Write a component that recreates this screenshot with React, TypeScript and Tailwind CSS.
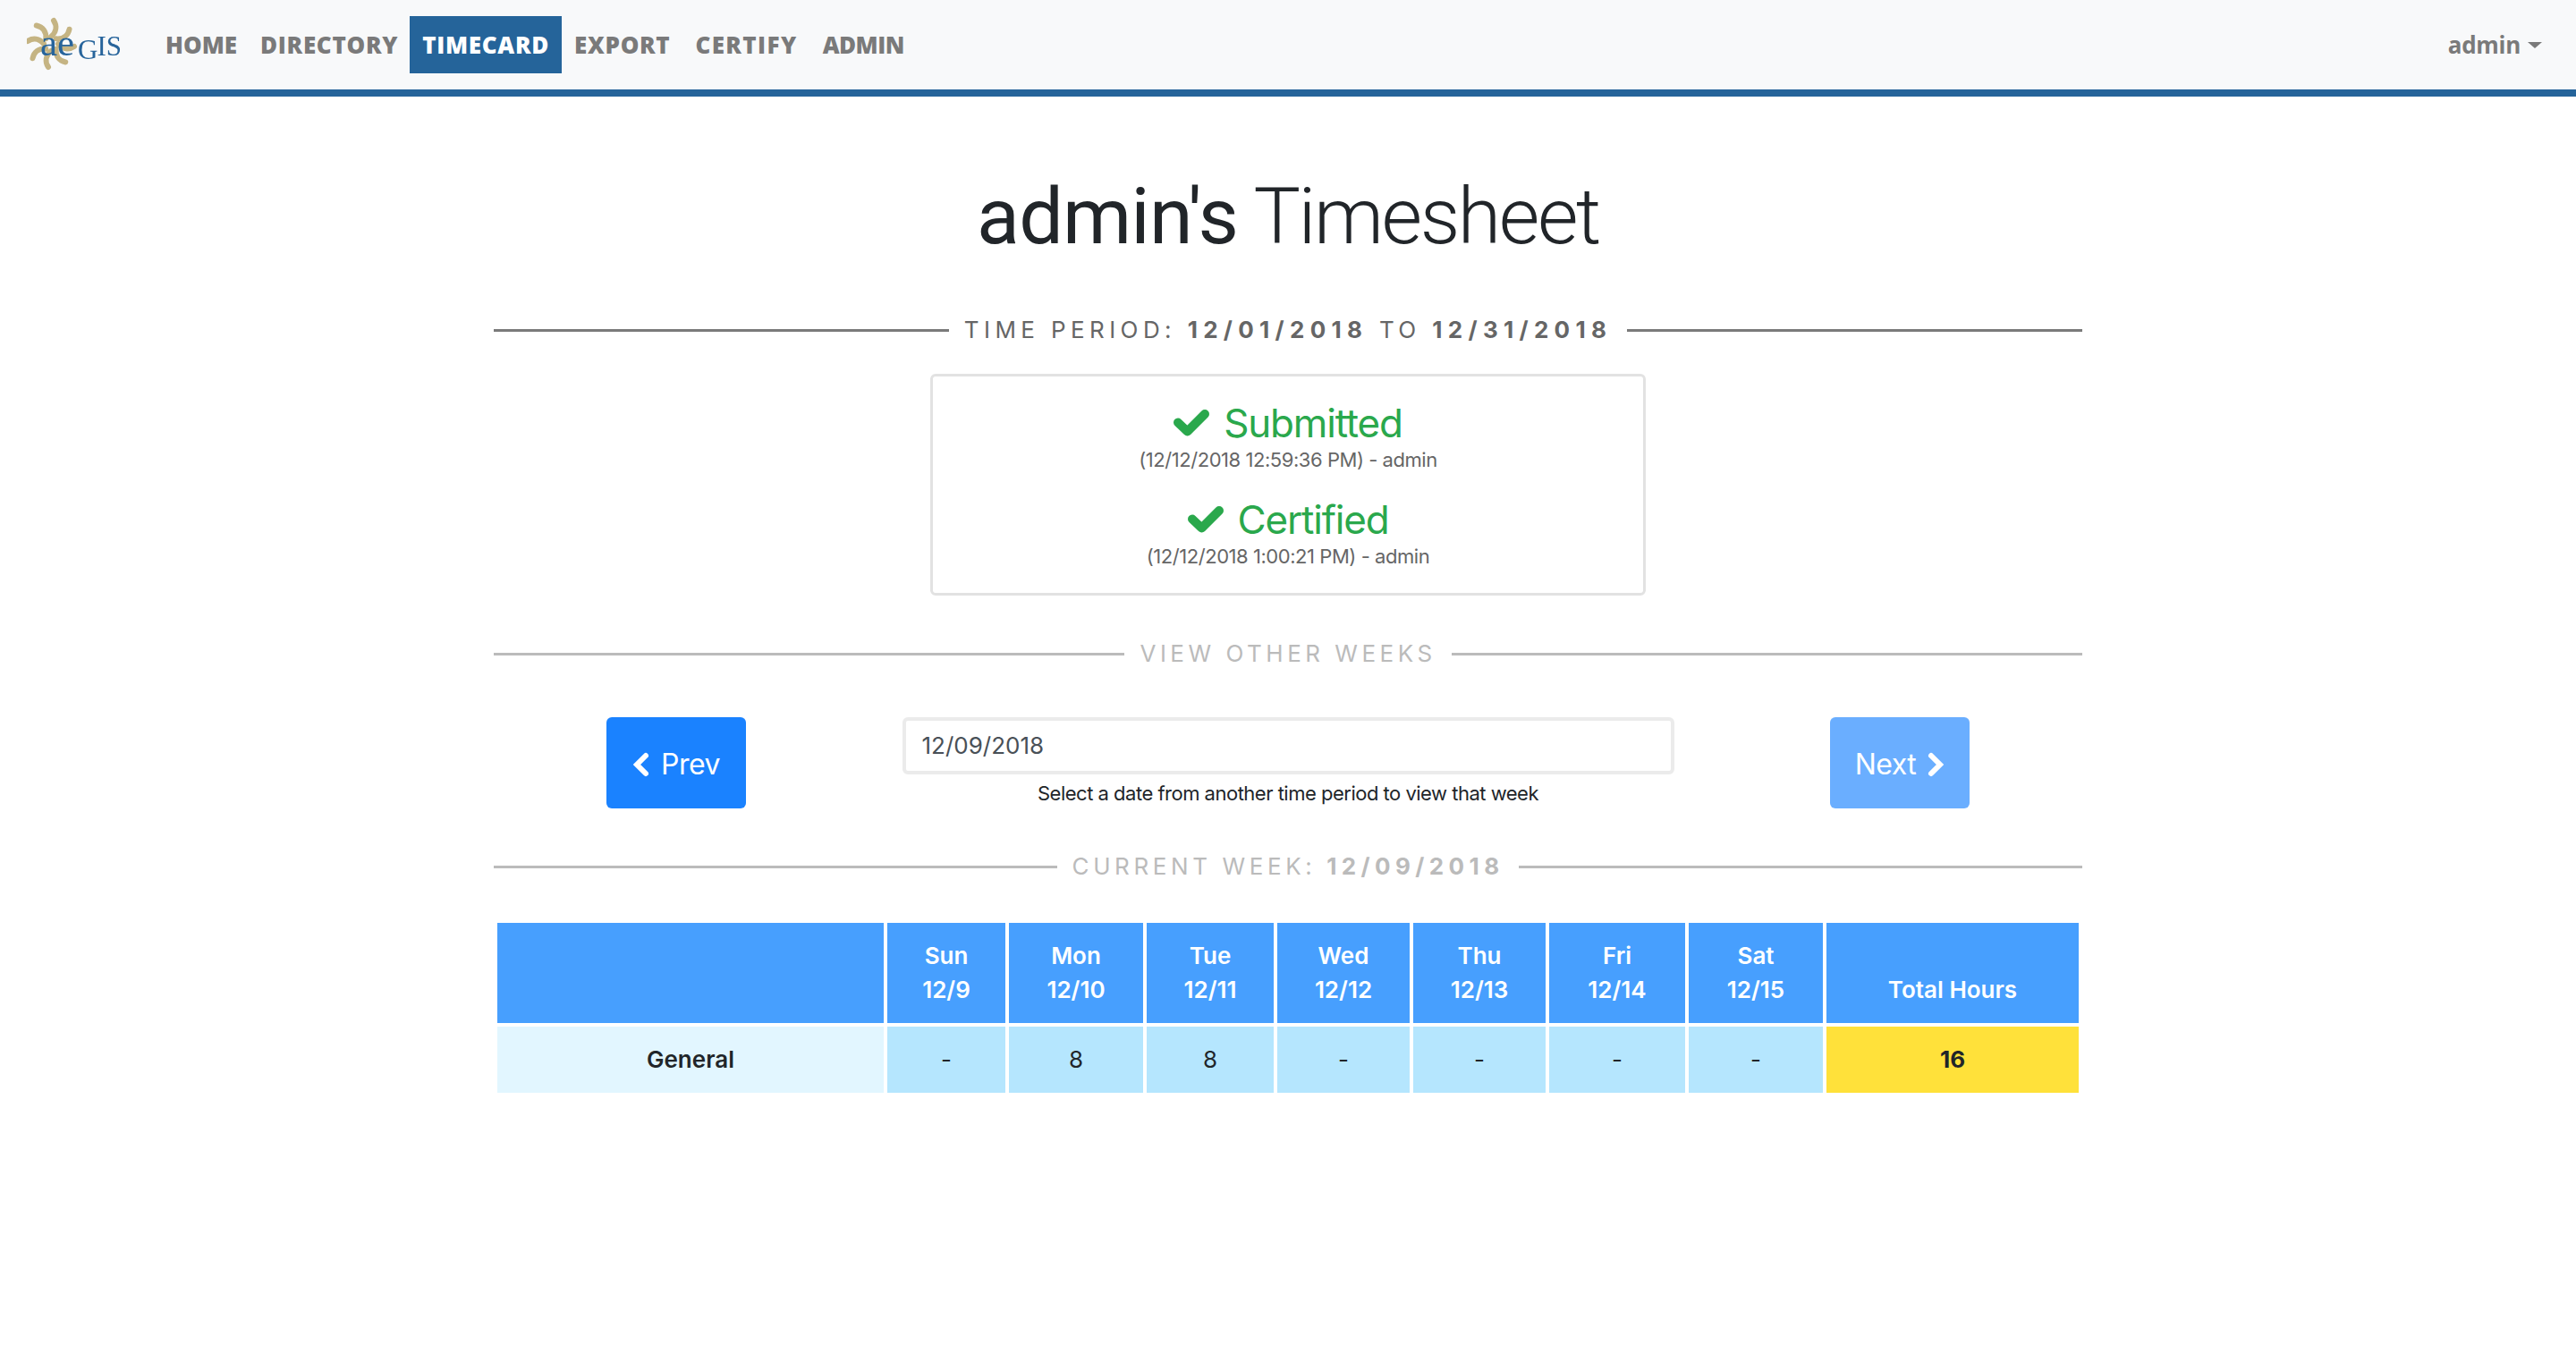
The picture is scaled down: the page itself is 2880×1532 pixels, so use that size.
import React from "react";

function Logo() {
  const angles = [0, 45, 90, 135, 180, 225, 270, 315];
  return (
    <svg width="112" height="64" viewBox="0 0 112 64" className="block shrink-0 blur-[0.4px]">
      <g transform="translate(27 31)" fill="none" stroke="#c5b483" strokeWidth="6" strokeLinecap="round">
        {angles.map((a) => (
          <path key={a} d="M0 -8 C 6 -13 7 -20 3 -26" transform={`rotate(${a})`} />
        ))}
      </g>
      <g fill="#27649b" fontFamily="'Liberation Serif', serif">
        <text x="15" y="44" fontSize="43">ae</text>
        <text x="57" y="44" fontSize="31">
          <tspan dy="4">G</tspan>
          <tspan dy="-4" dx="-1">IS</tspan>
        </text>
      </g>
    </svg>
  );
}

function Check() {
  return (
    <svg width="40" height="30" viewBox="0 0 40 30" className="block shrink-0">
      <path d="M5 14.5 L15.5 24.5 L35 5" fill="none" stroke="currentColor" strokeWidth="10" strokeLinecap="round" strokeLinejoin="round" />
    </svg>
  );
}

function Chevron({ right }: { right?: boolean }) {
  return (
    <svg width="20" height="30" viewBox="0 0 20 30" className="block shrink-0">
      <path
        d={right ? "M5 5 L15 15 L5 25" : "M15 5 L5 15 L15 25"}
        fill="none"
        stroke="currentColor"
        strokeWidth="6"
        strokeLinecap="round"
        strokeLinejoin="miter"
      />
    </svg>
  );
}

function Divider({ children, tone, tracking }: { children: React.ReactNode; tone: "dark" | "light"; tracking: string }) {
  const line = tone === "dark" ? "bg-[#7a7a7a]" : "bg-[#bbbbbb]";
  const text = tone === "dark" ? "text-[#666666]" : "text-[#bbbbbb]";
  return (
    <div className="flex items-center gap-[17px]">
      <div className={`h-[3px] flex-1 ${line}`} />
      <div className={`text-[26px] leading-[32px] whitespace-nowrap ${tracking} ${text}`}>{children}</div>
      <div className={`h-[3px] flex-1 ${line}`} />
    </div>
  );
}

const days = [
  { d: "Sun", n: "12/9", v: "-", w: "w-[132px]" },
  { d: "Mon", n: "12/10", v: "8", w: "w-[150px]" },
  { d: "Tue", n: "12/11", v: "8", w: "w-[142px]" },
  { d: "Wed", n: "12/12", v: "-", w: "w-[148px]" },
  { d: "Thu", n: "12/13", v: "-", w: "w-[148px]" },
  { d: "Fri", n: "12/14", v: "-", w: "w-[152px]" },
  { d: "Sat", n: "12/15", v: "-", w: "w-[150px]" },
];

const nav = [
  { t: "HOME", c: "px-[13px] tracking-[0px] text-[#7a7a7a]" },
  { t: "DIRECTORY", c: "px-[13px] tracking-[0.7px] text-[#7a7a7a]" },
  { t: "TIMECARD", c: "px-[14px] tracking-[0.7px] text-white bg-[#25649a]" },
  { t: "EXPORT", c: "px-[14px] tracking-[0.7px] text-[#7a7a7a]" },
  { t: "CERTIFY", c: "px-[14px] tracking-[1.4px] text-[#7a7a7a]" },
  { t: "ADMIN", c: "px-[14px] tracking-[-0.5px] text-[#7a7a7a]" },
];

function Status({ label, sub }: { label: string; sub: string }) {
  return (
    <div className="flex flex-col items-center">
      <div className="flex items-center gap-[16px] text-[#2aa84c] text-[44px] leading-[54px] tracking-[-1.2px]">
        <Check />
        <span>{label}</span>
      </div>
      <div className="text-[22px] leading-[28px] text-[#666666] tracking-[-0.45px]">{sub}</div>
    </div>
  );
}

export default function App() {
  return (
    <div className="min-h-[1532px] bg-white font-['Inter','Liberation_Sans',sans-serif] text-[#212529]">
      <nav className="h-[108px] bg-[#f8f9fa] border-b-[8px] border-[#25649a] flex items-center pl-[30px] pr-[38px]">
        <Logo />
        <ul className="flex items-center ml-[30px] text-[26px] font-['Open_Sans','Liberation_Sans',sans-serif] font-extrabold">
          {nav.map((n) => (
            <li key={n.t} className={`h-[64px] flex items-center ${n.c}`}>
              {n.t}
            </li>
          ))}
        </ul>
        <div className="ml-auto flex items-center gap-[8px] text-[#7a7a7a] text-[26px] font-bold tracking-[-0.3px] font-['Open_Sans','Liberation_Sans',sans-serif]">
          admin
          <span className="w-0 h-0 border-x-[8px] border-x-transparent border-t-[7px] border-t-[#7a7a7a]" />
        </div>
      </nav>

      <main className="w-[1776px] mx-auto">
        <h1 className="mt-[76px] text-center text-[88px] leading-[116px] font-light tracking-[-2.4px] font-['Roboto',sans-serif]">
          <span className="font-normal tracking-[-0.8px]">admin's</span> Timesheet
        </h1>

        <div className="mt-[53px]">
          <Divider tone="dark" tracking="tracking-[5.4px]">
            TIME PERIOD: <b className="font-bold tracking-[6.3px]">12/01/2018</b> TO{" "}
            <b className="font-bold tracking-[6.3px]">12/31/2018</b>
          </Divider>
        </div>

        <div className="mx-auto mt-[33px] w-[800px] h-[248px] border-[3px] border-[#e2e2e2] rounded-[6px] flex flex-col items-center pt-[25px] gap-[26px]">
          <Status label="Submitted" sub="(12/12/2018 12:59:36 PM) - admin" />
          <Status label="Certified" sub="(12/12/2018 1:00:21 PM) - admin" />
        </div>

        <div className="mt-[49px]">
          <Divider tone="light" tracking="tracking-[4.5px]">VIEW OTHER WEEKS</Divider>
        </div>

        <div className="mt-[55px] px-[126px] flex justify-between items-start">
          <button className="w-[156px] h-[102px] rounded-[6px] bg-[#1a82ff] text-white text-[32px] tracking-[-0.5px] flex items-center justify-center gap-[12px] pt-[3px]">
            <Chevron />
            Prev
          </button>
          <div className="w-[863px] flex flex-col items-center">
            <input
              readOnly
              value="12/09/2018"
              className="w-full h-[64px] border-[4px] border-[#ebebeb] rounded-[6px] px-[18px] pb-[2px] text-[26px] text-[#495057] outline-none bg-white"
            />
            <div className="mt-[7px] text-[22px] leading-[28px] text-[#212529] tracking-[-0.5px]">
              Select a date from another time period to view that week
            </div>
          </div>
          <button className="w-[156px] h-[102px] rounded-[6px] bg-[#6aaeff] text-white text-[32px] tracking-[-0.5px] flex items-center justify-center gap-[12px] pt-[3px]">
            Next
            <Chevron right />
          </button>
        </div>

        <div className="mt-[49px]">
          <Divider tone="light" tracking="tracking-[4.6px]">
            CURRENT WEEK: <b className="font-bold tracking-[5.4px]">12/09/2018</b>
          </Divider>
        </div>

        <table className="mt-[43px] w-[1776px] table-fixed border-separate border-spacing-[4px] text-[26px] leading-[38px] text-center">
          <thead>
            <tr className="h-[112px] bg-[#479ffe] text-white">
              <th className="w-[432px] bg-[#479ffe]" />
              {days.map((c) => (
                <th key={c.d} className={`${c.w} font-semibold align-bottom pb-[18px]`}>
                  {c.d}
                  <br />
                  {c.n}
                </th>
              ))}
              <th className="w-[282px] font-semibold align-bottom pb-[18px]">Total Hours</th>
            </tr>
          </thead>
          <tbody>
            <tr className="h-[74px]">
              <td className="bg-[#e2f6ff] font-semibold">General</td>
              {days.map((c) => (
                <td key={c.d} className="bg-[#b5e6fe]">
                  {c.v}
                </td>
              ))}
              <td className="bg-[#ffe13a] font-bold">16</td>
            </tr>
          </tbody>
        </table>
      </main>
    </div>
  );
}
